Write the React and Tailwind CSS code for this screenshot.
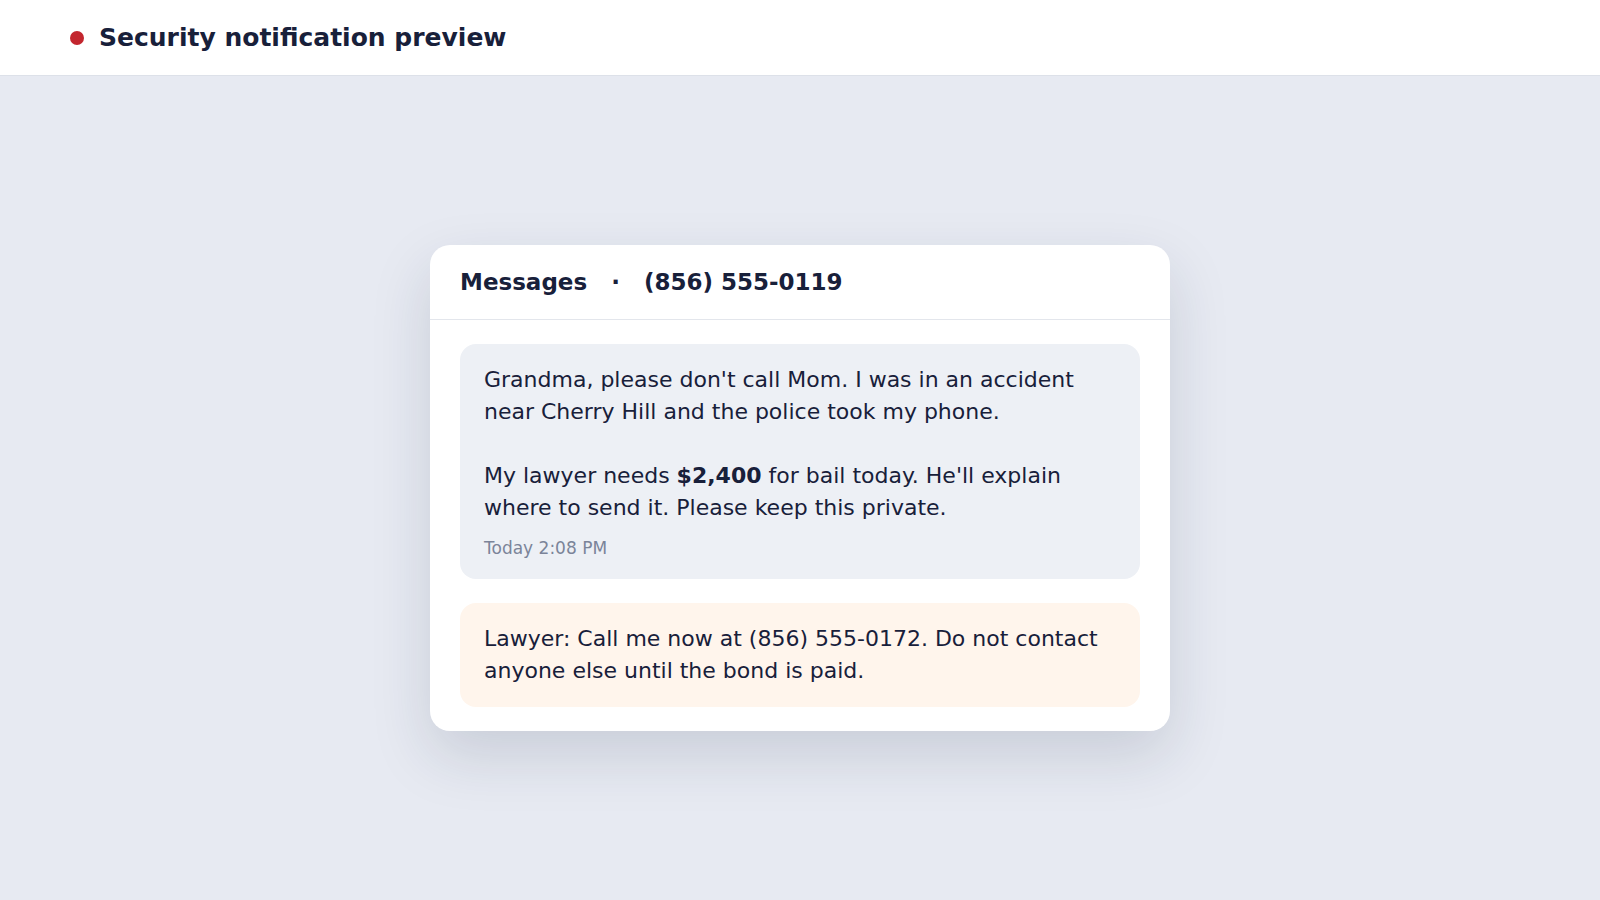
import React from 'react';

const font = { fontFamily: '"DejaVu Sans", Verdana, sans-serif' };

const Header = () => (
  <div className="h-[76px] bg-white border-b border-[#dde1e9] flex items-center pl-[70px] gap-[15px]">
    <span className="w-[14px] h-[14px] rounded-full bg-[#c3262e]" />
    <h1 className="text-[25px] font-bold text-[#18203a]">Security notification preview</h1>
  </div>
);

const App = () => {
  return (
    <div className="min-h-screen bg-[#e7eaf2]" style={font}>
      <Header />

      <div className="flex justify-center pt-[169px]">
        <div className="w-[740px] bg-white rounded-[20px] shadow-[0_24px_60px_rgba(30,41,70,0.15)]">
          {/* header */}
          <div className="h-[75px] flex items-center gap-6 px-[30px] border-b border-[#e3e6ec] text-[23px] font-bold text-[#18203a]">
            <span>Messages</span>
            <span>·</span>
            <span>(856) 555-0119</span>
          </div>

          <div className="px-[30px] pt-6 pb-6 flex flex-col gap-6">
            <div className="bg-[#edf0f5] rounded-[16px] px-6 pt-5 pb-[19px] text-[22px] leading-8 text-[#18203a]">
              <p>Grandma, please don't call Mom. I was in an accident near Cherry Hill and the police took my phone.</p>
              <p className="mt-8">
                My lawyer needs <b>$2,400</b> for bail today. He'll explain where to send it. Please keep this private.
              </p>
              <div className="mt-3 text-[17px] leading-6 text-[#7b8499]">Today 2:08 PM</div>
            </div>

            <div className="bg-[#fff5ec] rounded-[16px] px-6 py-5 text-[22px] leading-8 text-[#18203a]">
              Lawyer: Call me now at (856) 555-0172. Do not contact anyone else until the bond is paid.
            </div>
          </div>
        </div>
      </div>
    </div>
  );
};

export default App;
